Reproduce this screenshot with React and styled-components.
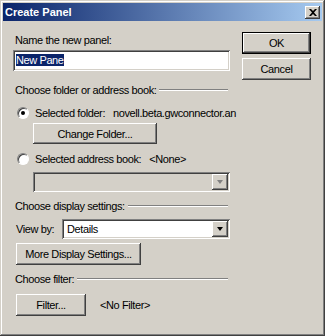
import React from 'react';
import styled, { createGlobalStyle } from 'styled-components';

const GlobalStyle = createGlobalStyle`
  html, body {
    margin: 0;
    padding: 0;
    background: #d4d0c8;
  }
  body {
    font-family: "Liberation Sans", Arial, sans-serif;
    font-size: 11px;
    letter-spacing: -0.4px;
    color: #000;
  }
`

const Window = styled.div`
  width: 325px;
  height: 336px;
  box-sizing: border-box;
  padding: 3px;
  background: #d4d0c8;
  box-shadow: inset -1px -1px #404040, inset 1px 1px #d4d0c8,
    inset -2px -2px #808080, inset 2px 2px #ffffff;
  display: flex;
  flex-direction: column;
`

const TitleBar = styled.div`
  height: 18px;
  display: flex;
  align-items: center;
  justify-content: space-between;
  padding: 0 2px 0 2px;
  background: linear-gradient(to right, #0a246a, #a6caf0);
  color: #fff;
  font-weight: bold;
  font-size: 11px;
  letter-spacing: 0;
`

const CloseButton = styled.div`
  width: 15px;
  height: 13px;
  background: #d4d0c8;
  box-shadow: inset -1px -1px #404040, inset 1px 1px #ffffff,
    inset -2px -2px #808080;
  display: flex;
  align-items: center;
  justify-content: center;
`

const Body = styled.div`
  display: flex;
  padding: 0 0 0 10px;
  gap: 12px;
`

const MainColumn = styled.div`
  width: 217px;
  display: flex;
  flex-direction: column;
`

const SideColumn = styled.div`
  display: flex;
  flex-direction: column;
  gap: 4px;
  padding-top: 11px;
`

const Label = styled.div`
  height: 13px;
  line-height: 13px;
  padding-left: 2px;
  margin-top: ${p => p.$top || 0}px;
  white-space: nowrap;
`

const TextField = styled.div`
  height: 21px;
  box-sizing: border-box;
  margin-top: 3px;
  padding: 4px 3px;
  background: #fff;
  box-shadow: inset 1px 1px #808080, inset -1px -1px #ffffff,
    inset 2px 2px #404040, inset -2px -2px #d4d0c8;
  line-height: 13px;
`

const Selected = styled.span`
  background: #0a246a;
  color: #fff;
`

const GroupHeader = styled.div`
  display: flex;
  align-items: center;
  gap: 3px;
  height: 13px;
  padding-left: 2px;
  margin-top: ${p => p.$top || 0}px;
  white-space: nowrap;
  &::after {
    content: '';
    flex: 1;
    height: 0;
    border-top: 1px solid #808080;
    border-bottom: 1px solid #ffffff;
    margin-right: 2px;
  }
`

const RadioRow = styled.div`
  display: flex;
  align-items: center;
  height: 13px;
  padding-left: 4px;
  margin-top: ${p => p.$top || 0}px;
  white-space: nowrap;
`

const Radio = styled.span`
  width: 12px;
  height: 12px;
  flex-shrink: 0;
  box-sizing: border-box;
  border-radius: 50%;
  background: #fff;
  border: 1px solid;
  border-color: #808080 #ffffff #ffffff #808080;
  box-shadow: inset 1px 1px #404040;
  margin-right: 6px;
  display: flex;
  align-items: center;
  justify-content: center;
  &::after {
    content: '';
    width: 4px;
    height: 4px;
    border-radius: 50%;
    background: ${p => (p.$checked ? '#000' : 'transparent')};
  }
`

const Value = styled.span`
  margin-left: 8px;
`

const Button = styled.div`
  width: ${p => p.$width}px;
  height: ${p => p.$height || 21}px;
  margin-top: ${p => p.$top || 0}px;
  margin-left: ${p => p.$left || 0}px;
  box-sizing: border-box;
  display: flex;
  align-items: center;
  justify-content: center;
  background: #d4d0c8;
  box-shadow: ${p =>
    p.$default
      ? 'inset 0 0 0 1px #000, inset -2px -2px #404040, inset 2px 2px #ffffff, inset -3px -3px #808080'
      : 'inset -1px -1px #404040, inset 1px 1px #ffffff, inset -2px -2px #808080'};
  white-space: nowrap;
  flex-shrink: 0;
`

const Combo = styled.div`
  height: 20px;
  box-sizing: border-box;
  margin-left: ${p => p.$left || 0}px;
  margin-top: ${p => p.$top || 0}px;
  flex: ${p => (p.$grow ? 1 : 'none')};
  padding: 2px;
  display: flex;
  align-items: center;
  background: ${p => (p.$disabled ? '#d4d0c8' : '#fff')};
  box-shadow: inset 1px 1px #808080, inset -1px -1px #ffffff,
    inset 2px 2px #404040, inset -2px -2px #d4d0c8;
`

const ComboText = styled.span`
  flex: 1;
  padding-left: 3px;
`

const ComboArrow = styled.span`
  width: 16px;
  height: 16px;
  background: #d4d0c8;
  box-shadow: inset -1px -1px #404040, inset 1px 1px #ffffff,
    inset -2px -2px #808080;
  display: flex;
  align-items: center;
  justify-content: center;
  &::after {
    content: '';
    border-left: 3.5px solid transparent;
    border-right: 3.5px solid transparent;
    border-top: 4px solid ${p => (p.$disabled ? '#808080' : '#000')};
  }
`

const Row = styled.div`
  display: flex;
  align-items: center;
  margin-top: ${p => p.$top || 0}px;
  padding-left: ${p => p.$left || 0}px;
`

const RowLabel = styled.span`
  width: 46px;
  padding-left: 3px;
  flex-shrink: 0;
`

const Note = styled.span`
  margin-left: 14px;
`

export default function App() {
  return (
    <>
      <GlobalStyle />
      <Window>
        <TitleBar>
          <span>Create Panel</span>
          <CloseButton>
            <svg width="8" height="7" viewBox="0 0 8 7">
              <path d="M0 0 L2 0 L4 2 L6 0 L8 0 L5 3.5 L8 7 L6 7 L4 5 L2 7 L0 7 L3 3.5 Z" fill="#000" />
            </svg>
          </CloseButton>
        </TitleBar>
        <Body>
          <MainColumn>
            <Label $top={13}>Name the new panel:</Label>
            <TextField>
              <Selected>New Pane</Selected>
            </TextField>

            <GroupHeader $top={12}>Choose folder or address book:</GroupHeader>
            <RadioRow $top={10}>
              <Radio $checked />
              Selected folder:
              <Value>novell.beta.gwconnector.an</Value>
            </RadioRow>
            <Button $width={124} $height={21} $top={4} $left={20}>Change Folder...</Button>
            <RadioRow $top={8}>
              <Radio />
              Selected address book:
              <Value>&lt;None&gt;</Value>
            </RadioRow>
            <Combo $disabled $left={20} $top={7}>
              <ComboText />
              <ComboArrow $disabled />
            </Combo>

            <GroupHeader $top={7}>Choose display settings:</GroupHeader>
            <Row $top={7}>
              <RowLabel>View by:</RowLabel>
              <Combo $grow>
                <ComboText>Details</ComboText>
                <ComboArrow />
              </Combo>
            </Row>
            <Button $width={125} $height={22} $top={4} $left={3}>More Display Settings...</Button>

            <GroupHeader $top={7}>Choose filter:</GroupHeader>
            <Row $top={9} $left={3}>
              <Button $width={70} $height={22}>Filter...</Button>
              <Note>&lt;No Filter&gt;</Note>
            </Row>
          </MainColumn>
          <SideColumn>
            <Button $width={69} $height={22} $default>OK</Button>
            <Button $width={69} $height={22}>Cancel</Button>
          </SideColumn>
        </Body>
      </Window>
    </>
  );
}
